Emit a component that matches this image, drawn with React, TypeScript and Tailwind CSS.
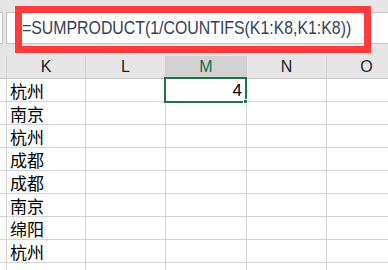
const cities = ["杭州", "南京", "杭州", "成都", "成都", "南京", "绵阳", "杭州", ""];

const cols = [
  { label: "K", w: "w-[79px]" },
  { label: "L", w: "w-[80px]" },
  { label: "M", w: "w-[81px]" },
  { label: "N", w: "w-[80px]" },
  { label: "O", w: "w-[80px]" },
];

const cjk = { fontFamily: '"Noto Sans CJK SC", "Liberation Sans", sans-serif' };
const latin = { fontFamily: '"Liberation Sans", Arial, sans-serif' };

export default function App() {
  return (
    <div className="relative w-[388px] h-[270px] overflow-hidden bg-white">
      {/* formula bar */}
      <div className="h-[56px] bg-[#e6e6e6] pt-[12px] flex">
        <div className="w-[3px] h-[32px] bg-white border-y border-r border-[#c6c6c6]" />
        <div className="ml-[3px] h-[32px] flex-1 min-w-0 bg-white border border-r-0 border-[#c6c6c6] flex items-center pl-[15px] overflow-hidden">
          <span
            className="inline-block origin-left scale-x-[0.835] text-[19px] text-[#34405a] whitespace-nowrap"
            style={latin}
          >
            =SUMPRODUCT(1/COUNTIFS(K1:K8,K1:K8))
          </span>
        </div>
      </div>

      {/* column headers */}
      <div className="flex h-[23px] bg-[#e6e6e6] border-b border-[#c8c8c8]" style={latin}>
        <div className="w-[6px] shrink-0" />
        {cols.map((c) => (
          <div
            key={c.label}
            className={`${c.w} shrink-0 border-l border-[#cfcfcf] flex items-center justify-center text-[16px] ${
              c.label === "M" ? "bg-[#d2d2d2] text-[#1d6b41]" : "text-[#222]"
            }`}
          >
            {c.label}
          </div>
        ))}
      </div>

      {/* rows */}
      {cities.map((city, i) => (
        <div key={i} className="flex h-[23px] border-b border-[#d4d4d4]">
          <div className="w-[6px] shrink-0" />
          {cols.map((c, j) => (
            <div
              key={c.label}
              className={`${c.w} shrink-0 border-l border-[#d4d4d4] flex items-center ${
                j === 2 ? "justify-end pr-[4px]" : "pl-[3px]"
              }`}
            >
              {j === 0 && (
                <span className="text-[17px] text-black leading-none" style={cjk}>
                  {city}
                </span>
              )}
              {j === 2 && i === 0 && (
                <span className="text-[17px] text-black leading-none" style={latin}>
                  4
                </span>
              )}
            </div>
          ))}
        </div>
      ))}

      {/* selected cell */}
      <div className="absolute left-[164px] top-[77px] w-[83px] h-[26px] border-2 border-[#217346]" />
      <div className="absolute left-[243px] top-[99px] w-[5px] h-[5px] bg-[#217346] border border-white" />

      {/* red highlight */}
      <div className="absolute left-[15px] top-[6px] w-[356px] h-[47px] border-[7px] border-[#ff3b3b]" />
    </div>
  );
}
